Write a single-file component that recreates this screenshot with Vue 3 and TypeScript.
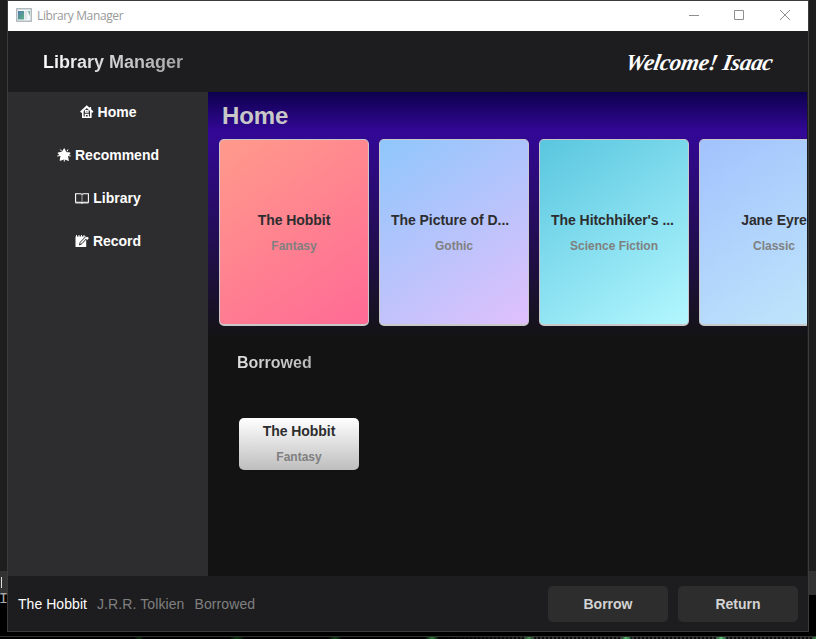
<script setup lang="ts">
interface Book {
  title: string
  genre: string
  theme: string
}

const nav: { icon: string; label: string }[] = [
  { icon: 'home', label: 'Home' },
  { icon: 'star', label: 'Recommend' },
  { icon: 'book', label: 'Library' },
  { icon: 'note', label: 'Record' },
]

const books: Book[] = [
  { title: 'The Hobbit', genre: 'Fantasy', theme: 'coral' },
  { title: 'The Picture of D...', genre: 'Gothic', theme: 'lilac' },
  { title: "The Hitchhiker's ...", genre: 'Science Fiction', theme: 'aqua' },
  { title: 'Jane Eyre', genre: 'Classic', theme: 'sky' },
]
</script>

<template>
  <div class="desktop">
    <span class="caret"></span>
    <span class="fragment">I</span>
    <div class="window">
      <div class="titlebar">
        <svg class="app-icon" width="16" height="14" viewBox="0 0 16 14">
          <defs>
            <linearGradient id="pane" x1="0" y1="0" x2="1" y2="1">
              <stop offset="0" stop-color="#4f7fae" />
              <stop offset="1" stop-color="#5eb184" />
            </linearGradient>
          </defs>
          <rect x=".75" y=".75" width="14.5" height="12.5" fill="#f4f6f7" stroke="#a9b3b8" stroke-width="1.3" />
          <rect x="2" y="3" width="6" height="8.5" fill="url(#pane)" />
          <rect x="8.5" y="3" width="2.5" height="8.5" fill="#dfe5e8" />
          <path d="M11.5 3H14v5z" fill="#85bba9" />
        </svg>
        <span class="window-title">Library Manager</span>
        <svg class="controls" width="104" height="12" viewBox="0 0 104 12" fill="none" stroke="#8f8f8f">
          <path d="M1 6.5h10" />
          <path d="M46.500 1.500h9v9h-9z" />
          <path d="M92 1l10 10M102 1L92 11" />
        </svg>
      </div>

      <header class="header">
        <h1>Library Manager</h1>
        <div class="welcome">Welcome! Isaac</div>
      </header>

      <div class="body">
        <nav class="sidebar">
          <a v-for="item in nav" :key="item.label" class="nav-item">
            <svg v-if="item.icon === 'home'" width="14" height="14" viewBox="0 0 14 14" fill="none" stroke="#fff">
              <path d="M.8 7.300L6.800 1.700l6 5.600" stroke-width="2" />
              <path d="M10.300 2v3" stroke-width="1.600" />
              <path d="M2.800 6v6.300h8V6" stroke-width="1.600" />
              <path d="M5.500 5.500h2.600v1.700H5.500zM5.300 12V9.300h3V12" stroke-width="1.200" />
            </svg>
            <svg v-else-if="item.icon === 'star'" width="14" height="14" viewBox="0 0 14 14" fill="#fff">
              <path d="M7.200 1l1.700 3.500 4 .5-2.500 3 .8 4.300L7.300 10.700l-4 1.500.8-4L1.300 5l4-.6z" stroke="#fff" stroke-width="1.200" stroke-linejoin="round" />
              <path d="M3.300 1.500l1.500 2M11 1.500l-1 1.800M.2 8l3.500-.5M13.800 8l-3-.5M7.300 13.500v-3" stroke="#fff" />
            </svg>
            <svg v-else-if="item.icon === 'book'" width="14" height="11" viewBox="0 0 14 11" fill="none" stroke="#fff">
              <path d="M7 1.500Q6.500.8 5.500.8H.6v8.500h5q1 0 1.400.7.400-.7 1.400-.7h5V.8H8.500Q7.500.8 7 1.500z" stroke-width="1.100" />
              <path d="M7 1.500v8" stroke="#aaa" />
              <path d="M.5 10h13" stroke-width=".8" />
            </svg>
            <svg v-else width="14" height="14" viewBox="0 0 14 14">
              <path d="M.5 2.500h10.700V13H.5z" fill="#fff" />
              <path d="M1.500 1v2M4 1v2M6.500 1v2M9 1v2" stroke="#fff" />
              <path d="M12.300 3.800L7 9.600l-2.500 1.400.7-2.700 5.300-5.500" fill="#fff" stroke="#2d2d2f" stroke-width="1" />
              <path d="M10.700 4.500l1.500-1.800L13.900 4l-1.600 1.900z" fill="#fff" />
            </svg>
            <span>{{ item.label }}</span>
          </a>
        </nav>

        <main class="main">
          <section class="hero">
            <h2>Home</h2>
            <div class="shelf">
              <article v-for="b in books" :key="b.title" class="card" :class="b.theme">
                <strong :class="{ truncated: b.title.endsWith('...') }">{{ b.title }}</strong>
                <small>{{ b.genre }}</small>
              </article>
            </div>
          </section>
          <section class="borrowed">
            <h3>Borrowed</h3>
            <article class="mini">
              <strong>The Hobbit</strong>
              <small>Fantasy</small>
            </article>
          </section>
        </main>
      </div>

      <footer class="footer">
        <span class="current">The Hobbit</span>
        <span>J.R.R. Tolkien</span>
        <span>Borrowed</span>
        <div class="actions">
          <button type="button">Borrow</button>
          <button type="button">Return</button>
        </div>
      </footer>
    </div>
    <div class="glow"></div>
  </div>
</template>

<style>
body {
  margin: 0;
  background: #000;
  overflow: hidden;
}
</style>

<style scoped>
* {
  box-sizing: border-box;
}
.desktop {
  position: relative;
  width: 816px;
  height: 639px;
  padding-left: 7px;
  overflow: hidden;
  background: linear-gradient(#1e1e1e 571px, #333 571px, #333 595px, #000 595px);
  font-family: 'Liberation Sans', Arial, sans-serif;
}
.caret {
  position: absolute;
  left: 1px;
  top: 577px;
  width: 1px;
  height: 11px;
  background: #ddd;
}
.fragment {
  position: absolute;
  left: 0;
  top: 592px;
  width: 6px;
  color: #aaa;
  font: 15px/16px 'Liberation Mono', monospace;
  letter-spacing: -3px;
  text-indent: -1px;
}
.window {
  position: relative;
  display: flex;
  flex-direction: column;
  width: 802px;
  height: 632px;
  border: 1px solid #3b3b3c;
  background: #1d1d1f;
}
.titlebar {
  display: flex;
  align-items: center;
  height: 30px;
  padding: 0 16px 0 8px;
  background: #fff;
}
.app-icon {
  margin-bottom: 2px;
}
.window-title {
  margin-left: 5px;
  color: #999;
  font: 12px/16px 'Open Sans', 'Noto Sans', sans-serif;
  letter-spacing: -0.38px;
}
.controls {
  margin: 0 0 2px auto;
}
.header {
  display: flex;
  justify-content: space-between;
  align-items: center;
  height: 61px;
  padding: 0 35px;
}
h1,
h2,
h3 {
  margin: 0;
}
h1 {
  font-size: 18px;
  line-height: 22px;
  color: transparent;
  background: linear-gradient(90deg, #fff, #a5a5a5);
  background-clip: text;
  -webkit-background-clip: text;
}
.welcome {
  padding-top: 3px;
  color: #fff;
  font: italic 700 23px/26px 'Brush Script MT', 'Liberation Serif', serif;
  letter-spacing: -0.3px;
  white-space: nowrap;
  transform: skewX(-10deg);
}
.body {
  display: flex;
  height: 484px;
}
.sidebar {
  display: flex;
  flex-direction: column;
  gap: 23px;
  width: 200px;
  padding-top: 10px;
  background: #2d2d2f;
}
.nav-item {
  display: flex;
  justify-content: center;
  align-items: center;
  gap: 4px;
  height: 20px;
  color: #fff;
  font-size: 14px;
  font-weight: 700;
}
.main {
  width: 599px;
  overflow: hidden;
  background: #131313;
}
.hero {
  height: 248px;
  padding: 9px 0 0 11px;
  background: linear-gradient(#0d004d, #330897 16%, #131313);
}
.main h2 {
  padding-left: 3px;
  color: #c8c8c8;
  font-size: 24px;
  line-height: 30px;
  letter-spacing: -0.1px;
}
.shelf {
  display: flex;
  gap: 10px;
  margin-top: 8px;
}
.card,
.mini {
  display: flex;
  flex-direction: column;
  align-items: center;
  color: #2d2d2f;
  border-radius: 5px;
  white-space: nowrap;
}
.card {
  flex: 0 0 150px;
  height: 187px;
  padding: 72px 11px 0;
  border: 1px solid #c8c8c8;
  border-bottom-width: 2px;
}
.coral {
  background: linear-gradient(145deg, #ff9a8b, #ff6a95);
}
.lilac {
  background: linear-gradient(145deg, #8fc7fc, #e0c0fc);
}
.aqua {
  background: linear-gradient(145deg, #59c6df, #b3f7ff);
}
.sky {
  background: linear-gradient(145deg, #a2c2fd, #c2e9fb);
}
strong {
  font-size: 14px;
  line-height: 17px;
  letter-spacing: -0.05px;
}
.truncated {
  align-self: flex-start;
}
small {
  margin-top: 9px;
  color: #808080;
  font-size: 12px;
  font-weight: 700;
  line-height: 16px;
}
.borrowed {
  padding: 13px 0 0 29px;
}
.borrowed h3 {
  width: 75px;
  font-size: 16px;
  line-height: 20px;
  color: transparent;
  background: linear-gradient(90deg, #dedede, #b8b8b8);
  background-clip: text;
  -webkit-background-clip: text;
}
.mini {
  width: 120px;
  height: 52px;
  margin: 45px 0 0 2px;
  padding-top: 5px;
  background: linear-gradient(#fff, #bebebe);
}
.footer {
  display: flex;
  align-items: center;
  gap: 10px;
  height: 55px;
  padding: 0 10px;
  color: #808080;
  font-size: 14px;
  letter-spacing: 0.1px;
}
.current {
  color: #fff;
  letter-spacing: 0.05px;
}
.actions {
  display: flex;
  gap: 10px;
  margin-left: auto;
}
button {
  width: 120px;
  height: 36px;
  padding: 0;
  border: 0;
  border-radius: 5px;
  background: #2d2d2d;
  color: #d3d3d3;
  font: 700 14px 'Liberation Sans', Arial, sans-serif;
}
.glow {
  height: 3px;
  margin: 4px 0 0 -7px;
  border-top: 1px solid #333;
  background:
    radial-gradient(ellipse 8px 3px at 237px 1px, #093d0b, transparent),
    radial-gradient(ellipse 7px 3px at 335px 1px, #0d4513, transparent),
    radial-gradient(ellipse 7px 3px at 432px 1px, #268838, transparent),
    radial-gradient(ellipse 6px 4px at 529px 1px, #409a50, transparent),
    radial-gradient(ellipse 6px 4px at 626px 1px, #55c66c, transparent),
    radial-gradient(ellipse 6px 4px at 721px 1px, #58d675, transparent),
    radial-gradient(ellipse 5px 4px at 816px 1px, #39a14c, transparent),
    radial-gradient(ellipse 5px 3px at 139px 1px, #092c0b, transparent),
    linear-gradient(90deg, #000 440px, transparent 540px),
    repeating-linear-gradient(90deg, #333 0 2px, #0b0b0d 2px 4px);
}
</style>
